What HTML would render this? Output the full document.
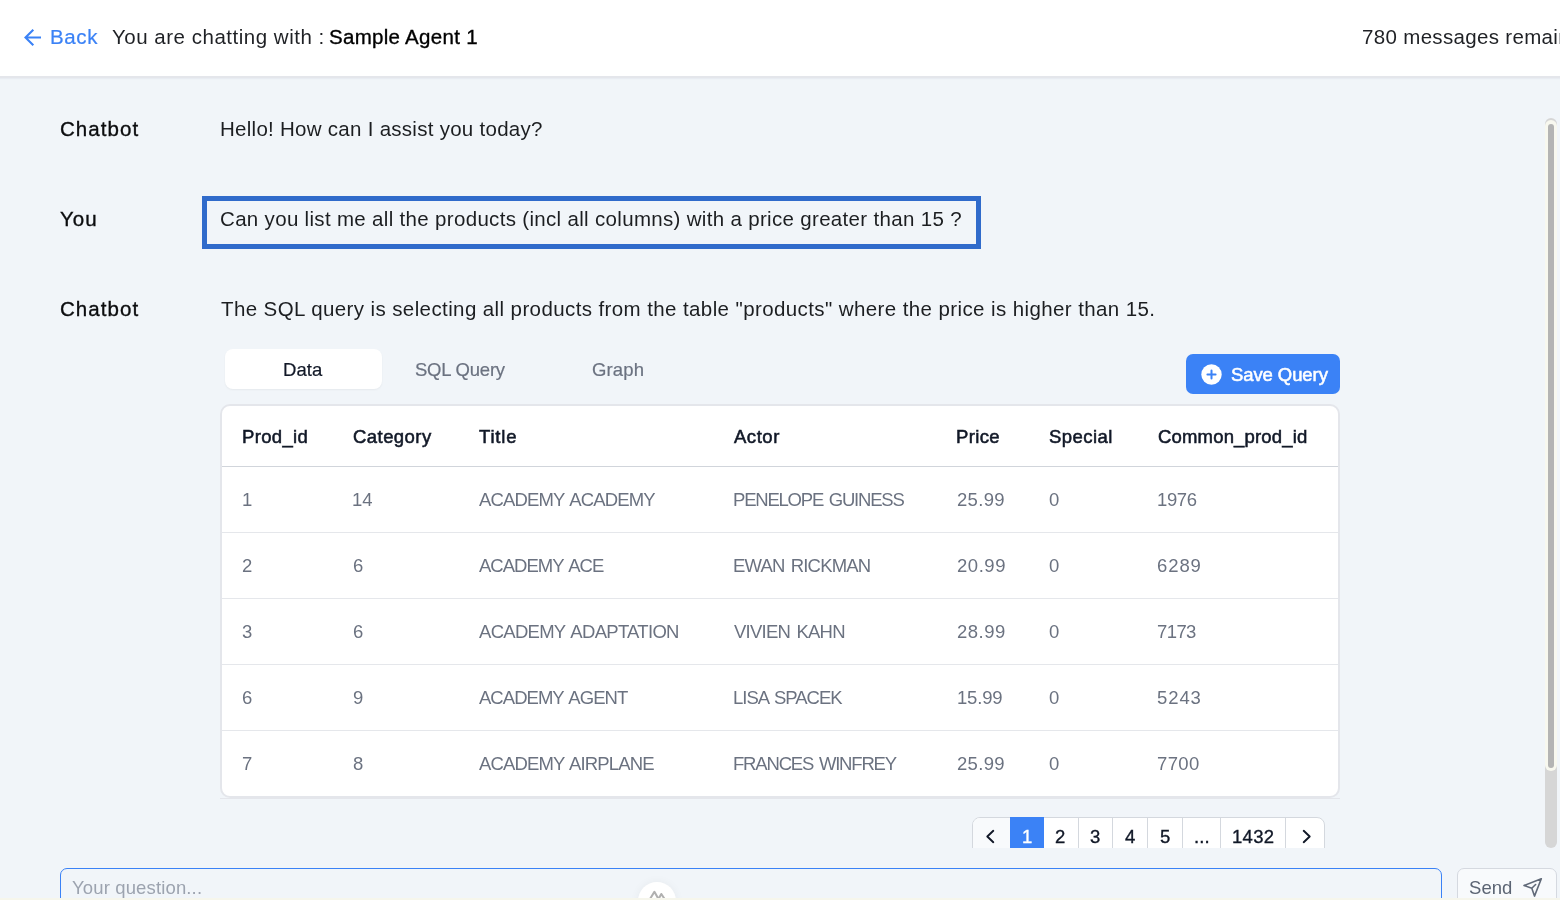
<!DOCTYPE html>
<html lang="en">
<head>
<meta charset="utf-8">
<title>Chat with Sample Agent 1</title>
<style>
*{box-sizing:border-box;margin:0;padding:0}
html,body{width:1560px;height:902px;overflow:hidden;background:#f1f5f9}
body{font-family:"Liberation Sans",sans-serif;color:#1c1e21;position:relative}
.a{position:absolute}
.t{position:absolute;white-space:nowrap;line-height:24px;will-change:transform}
#hdr{left:0;top:0;width:1560px;height:78px;background:#fff;border-bottom:2px solid #e4e6eb;box-shadow:0 1px 1px rgba(226,230,236,.6)}
#hl{left:202px;top:196px;width:779px;height:53px;border:5px solid #306bcb}
#tabsel{left:225px;top:349px;width:157px;height:40px;background:#fff;border-radius:8px;box-shadow:0 1px 2px rgba(0,0,0,.05)}
#savebtn{left:1186px;top:354px;width:154px;height:40px;background:#3b82f6;border-radius:7px}
#card{left:220px;top:404px;width:1120px;height:394px;background:#fff;border:2px solid #e4e6eb;border-radius:10px}
#cardline{left:220px;top:798px;width:1120px;height:1px;background:#e4e6eb}
.hr{position:absolute;left:222px;width:1116px;height:1px;background:#e5e7eb}
#pager{left:972px;top:817px;width:353px;height:31px;overflow:hidden}
#pager .in{position:absolute;left:0;top:0;width:353px;height:44px;border:1px solid #d4d8de;border-radius:8px;background:#fff;overflow:hidden}
#pager i{position:absolute;top:0;width:1px;height:44px;background:#d4d8de}
#inp{left:60px;top:868px;width:1382px;height:44px;border:1px solid #3b82f6;border-radius:7px;background:#f1f5f9}
#sendbtn{left:1457px;top:868px;width:100px;height:44px;border:1px solid #d5d9e0;border-radius:7px;background:#f8fafc}
#strip1{left:0;top:898px;width:1560px;height:2px;background:#f6f6ec}
#strip2{left:0;top:900px;width:1560px;height:2px;background:#fff}
#sbtrack{left:1545px;top:118px;width:12px;height:730px;border-radius:6px;background:#d6d6d6}
#sbcream{left:1545px;top:120px;width:12px;height:651px;border-radius:6px;background:#f8f8ef}
#sbthumb{left:1548px;top:124px;width:6px;height:644px;border-radius:3px;background:#b4b4b4}
#fab{left:638px;top:882px;width:38px;height:38px;border-radius:50%;background:#fff;box-shadow:0 0 10px rgba(0,0,0,.05)}
</style>
</head>
<body>
<div id="hdr" class="a"></div>
<svg class="a" style="left:22px;top:27px" width="22" height="22" viewBox="0 0 22 22" fill="none" stroke="#3b82f6" stroke-width="2.1" stroke-linecap="butt" stroke-linejoin="miter"><path d="M11.3 2.75L3.5 10.5L11.3 18.25M3.5 10.5H19"/></svg>
<div id="hl" class="a"></div>
<div id="tabsel" class="a"></div>
<div id="savebtn" class="a"></div>
<svg class="a" style="left:1201px;top:364px" width="21" height="21" viewBox="0 0 21 21"><circle cx="10.5" cy="10.5" r="10.2" fill="#fff"/><path d="M10.5 6.4v8.2M6.4 10.5h8.2" stroke="#3b82f6" stroke-width="2" stroke-linecap="round" fill="none"/></svg>
<div id="card" class="a"></div>
<div id="cardline" class="a"></div>
<div class="hr" style="top:466px;background:#d1d5db"></div>
<div class="hr" style="top:532px"></div>
<div class="hr" style="top:598px"></div>
<div class="hr" style="top:664px"></div>
<div class="hr" style="top:730px"></div>
<div id="pager" class="a"><div class="in">
<div class="a" style="left:0;top:0;width:37px;height:44px;background:#f8fafc"></div>
<i style="left:105px"></i><i style="left:139px"></i><i style="left:174px"></i><i style="left:209px"></i><i style="left:247px"></i><i style="left:312px"></i>
</div><div class="a" style="left:38px;top:0;width:34px;height:44px;background:#3b82f6"></div></div>
<svg class="a" style="left:984px;top:828px" width="13" height="17" viewBox="0 0 13 17" fill="none" stroke="#111827" stroke-width="1.9" stroke-linecap="round" stroke-linejoin="round"><path d="M9.3 2.8L3.3 8.5L9.3 14.2"/></svg>
<svg class="a" style="left:1300px;top:828px" width="13" height="17" viewBox="0 0 13 17" fill="none" stroke="#111827" stroke-width="1.9" stroke-linecap="round" stroke-linejoin="round"><path d="M3.7 2.8L9.7 8.5L3.7 14.2"/></svg>
<div id="inp" class="a"></div>
<div id="sendbtn" class="a"></div>
<svg class="a" style="left:1521px;top:876px" width="24" height="24" viewBox="0 0 24 24" fill="none" stroke="#606978" stroke-width="1.6" stroke-linejoin="round" stroke-linecap="round"><path d="M20.3 2.7L3 9.5L10.8 12.2L13.5 20.1Z M10.8 12.2L14.6 8.5"/></svg>
<div id="fab" class="a"></div>
<svg class="a" style="left:648px;top:888.8px" width="20" height="12" viewBox="0 0 20 12" fill="none" stroke="#b0b0b0" stroke-width="2.1" stroke-linejoin="round" stroke-linecap="round"><path d="M2 10L6.4 2.8L10.5 10L13.3 5L16.6 10"/></svg>

<span class="t" id="back" style="left:49.74px;top:24.90px;font-size:20.5px;letter-spacing:0.607px;color:#3b82f6;-webkit-text-stroke:0.2px currentColor;">Back</span>
<span class="t" id="chatw" style="left:112.29px;top:24.90px;font-size:20.5px;letter-spacing:0.512px;color:#1f2125;">You are chatting with :</span>
<span class="t" id="agent" style="left:328.72px;top:24.90px;font-size:20.5px;letter-spacing:0.292px;color:#000;-webkit-text-stroke:0.35px currentColor;">Sample Agent 1</span>
<span class="t" id="remain" style="left:1362.14px;top:24.90px;font-size:20.5px;letter-spacing:0.330px;color:#1f2125;">780 messages remaining</span>
<span class="t" id="l1" style="left:59.71px;top:117.10px;font-size:20.5px;letter-spacing:1.069px;color:#0b0c0e;-webkit-text-stroke:0.35px currentColor;">Chatbot</span>
<span class="t" id="m1" style="left:219.61px;top:117.10px;font-size:20.5px;letter-spacing:0.276px;color:#1c1e21;">Hello! How can I assist you today?</span>
<span class="t" id="l2" style="left:60.27px;top:207.10px;font-size:20.5px;letter-spacing:0.994px;color:#0b0c0e;-webkit-text-stroke:0.35px currentColor;">You</span>
<span class="t" id="m2" style="left:220.19px;top:207.10px;font-size:20.5px;letter-spacing:0.321px;color:#1c1e21;">Can you list me all the products (incl all columns) with a price greater than 15 ?</span>
<span class="t" id="l3" style="left:59.71px;top:297.10px;font-size:20.5px;letter-spacing:1.069px;color:#0b0c0e;-webkit-text-stroke:0.35px currentColor;">Chatbot</span>
<span class="t" id="m3" style="left:220.84px;top:297.10px;font-size:20.5px;letter-spacing:0.398px;color:#1c1e21;">The SQL query is selecting all products from the table &quot;products&quot; where the price is higher than 15.</span>
<span class="t" id="tab1" style="left:283.48px;top:357.89px;font-size:18.5px;letter-spacing:0.095px;color:#111827;-webkit-text-stroke:0.2px currentColor;">Data</span>
<span class="t" id="tab2" style="left:414.97px;top:357.89px;font-size:18.5px;letter-spacing:-0.218px;color:#6b7280;-webkit-text-stroke:0.2px currentColor;">SQL Query</span>
<span class="t" id="tab3" style="left:591.50px;top:357.89px;font-size:18.5px;letter-spacing:0.151px;color:#6b7280;-webkit-text-stroke:0.2px currentColor;">Graph</span>
<span class="t" id="saveq" style="left:1230.70px;top:362.59px;font-size:18.5px;letter-spacing:-0.088px;color:#fff;-webkit-text-stroke:0.55px currentColor;">Save Query</span>
<span class="t" id="h1" style="left:241.68px;top:424.89px;font-size:18.5px;letter-spacing:0.331px;color:#111827;-webkit-text-stroke:0.55px currentColor;">Prod_id</span>
<span class="t" id="h2" style="left:352.94px;top:424.89px;font-size:18.5px;letter-spacing:0.448px;color:#111827;-webkit-text-stroke:0.55px currentColor;">Category</span>
<span class="t" id="h3" style="left:479.43px;top:424.89px;font-size:18.5px;letter-spacing:0.794px;color:#111827;-webkit-text-stroke:0.55px currentColor;">Title</span>
<span class="t" id="h4" style="left:734.20px;top:424.89px;font-size:18.5px;letter-spacing:0.529px;color:#111827;-webkit-text-stroke:0.55px currentColor;">Actor</span>
<span class="t" id="h5" style="left:956.48px;top:424.89px;font-size:18.5px;letter-spacing:0.377px;color:#111827;-webkit-text-stroke:0.55px currentColor;">Price</span>
<span class="t" id="h6" style="left:1049.20px;top:424.89px;font-size:18.5px;letter-spacing:0.464px;color:#111827;-webkit-text-stroke:0.55px currentColor;">Special</span>
<span class="t" id="h7" style="left:1157.74px;top:424.89px;font-size:18.5px;letter-spacing:0.174px;color:#111827;-webkit-text-stroke:0.55px currentColor;">Common_prod_id</span>
<span class="t" id="r0a" style="left:241.58px;top:487.79px;font-size:18.5px;color:#6b7280;">1</span>
<span class="t" id="r0b" style="left:352.08px;top:487.79px;font-size:18.5px;color:#6b7280;">14</span>
<span class="t" id="r0c" style="left:479.45px;top:487.79px;font-size:18.5px;letter-spacing:-0.848px;color:#6b7280;word-spacing:1.8px;">ACADEMY ACADEMY</span>
<span class="t" id="r0d" style="left:732.77px;top:487.79px;font-size:18.5px;letter-spacing:-1.214px;color:#6b7280;word-spacing:1.8px;">PENELOPE GUINESS</span>
<span class="t" id="r0e" style="left:956.70px;top:487.79px;font-size:18.5px;letter-spacing:0.321px;color:#6b7280;">25.99</span>
<span class="t" id="r0f" style="left:1049.40px;top:487.79px;font-size:18.5px;color:#6b7280;">0</span>
<span class="t" id="r0g" style="left:1157.18px;top:487.79px;font-size:18.5px;letter-spacing:-0.410px;color:#6b7280;">1976</span>
<span class="t" id="r1a" style="left:242.00px;top:553.79px;font-size:18.5px;color:#6b7280;">2</span>
<span class="t" id="r1b" style="left:352.50px;top:553.79px;font-size:18.5px;color:#6b7280;">6</span>
<span class="t" id="r1c" style="left:479.45px;top:553.79px;font-size:18.5px;letter-spacing:-0.977px;color:#6b7280;word-spacing:1.8px;">ACADEMY ACE</span>
<span class="t" id="r1d" style="left:732.77px;top:553.79px;font-size:18.5px;letter-spacing:-0.810px;color:#6b7280;word-spacing:1.8px;">EWAN RICKMAN</span>
<span class="t" id="r1e" style="left:956.70px;top:553.79px;font-size:18.5px;letter-spacing:0.542px;color:#6b7280;">20.99</span>
<span class="t" id="r1f" style="left:1049.40px;top:553.79px;font-size:18.5px;color:#6b7280;">0</span>
<span class="t" id="r1g" style="left:1157.20px;top:553.79px;font-size:18.5px;letter-spacing:0.900px;color:#6b7280;">6289</span>
<span class="t" id="r2a" style="left:242.00px;top:619.79px;font-size:18.5px;color:#6b7280;">3</span>
<span class="t" id="r2b" style="left:352.50px;top:619.79px;font-size:18.5px;color:#6b7280;">6</span>
<span class="t" id="r2c" style="left:479.45px;top:619.79px;font-size:18.5px;letter-spacing:-0.713px;color:#6b7280;word-spacing:1.8px;">ACADEMY ADAPTATION</span>
<span class="t" id="r2d" style="left:733.60px;top:619.79px;font-size:18.5px;letter-spacing:-0.744px;color:#6b7280;word-spacing:1.8px;">VIVIEN KAHN</span>
<span class="t" id="r2e" style="left:956.70px;top:619.79px;font-size:18.5px;letter-spacing:0.484px;color:#6b7280;">28.99</span>
<span class="t" id="r2f" style="left:1049.40px;top:619.79px;font-size:18.5px;color:#6b7280;">0</span>
<span class="t" id="r2g" style="left:1157.20px;top:619.79px;font-size:18.5px;letter-spacing:-0.582px;color:#6b7280;">7173</span>
<span class="t" id="r3a" style="left:242.00px;top:685.79px;font-size:18.5px;color:#6b7280;">6</span>
<span class="t" id="r3b" style="left:352.50px;top:685.79px;font-size:18.5px;color:#6b7280;">9</span>
<span class="t" id="r3c" style="left:479.45px;top:685.79px;font-size:18.5px;letter-spacing:-0.965px;color:#6b7280;word-spacing:1.8px;">ACADEMY AGENT</span>
<span class="t" id="r3d" style="left:732.77px;top:685.79px;font-size:18.5px;letter-spacing:-1.008px;color:#6b7280;word-spacing:1.8px;">LISA SPACEK</span>
<span class="t" id="r3e" style="left:956.88px;top:685.79px;font-size:18.5px;letter-spacing:-0.194px;color:#6b7280;">15.99</span>
<span class="t" id="r3f" style="left:1049.40px;top:685.79px;font-size:18.5px;color:#6b7280;">0</span>
<span class="t" id="r3g" style="left:1157.19px;top:685.79px;font-size:18.5px;letter-spacing:0.908px;color:#6b7280;">5243</span>
<span class="t" id="r4a" style="left:242.00px;top:751.79px;font-size:18.5px;color:#6b7280;">7</span>
<span class="t" id="r4b" style="left:352.50px;top:751.79px;font-size:18.5px;color:#6b7280;">8</span>
<span class="t" id="r4c" style="left:479.45px;top:751.79px;font-size:18.5px;letter-spacing:-0.871px;color:#6b7280;word-spacing:1.8px;">ACADEMY AIRPLANE</span>
<span class="t" id="r4d" style="left:732.77px;top:751.79px;font-size:18.5px;letter-spacing:-1.182px;color:#6b7280;word-spacing:1.8px;">FRANCES WINFREY</span>
<span class="t" id="r4e" style="left:956.70px;top:751.79px;font-size:18.5px;letter-spacing:0.321px;color:#6b7280;">25.99</span>
<span class="t" id="r4f" style="left:1049.40px;top:751.79px;font-size:18.5px;color:#6b7280;">0</span>
<span class="t" id="r4g" style="left:1157.20px;top:751.79px;font-size:18.5px;letter-spacing:0.380px;color:#6b7280;">7700</span>
<span class="t" id="p1" style="left:1021.66px;top:825.19px;font-size:18.5px;color:#fff;-webkit-text-stroke:0.35px currentColor;">1</span>
<span class="t" id="p2" style="left:1054.70px;top:825.19px;font-size:18.5px;color:#111827;-webkit-text-stroke:0.35px currentColor;">2</span>
<span class="t" id="p3" style="left:1090.10px;top:825.19px;font-size:18.5px;color:#111827;-webkit-text-stroke:0.35px currentColor;">3</span>
<span class="t" id="p4" style="left:1125.31px;top:825.19px;font-size:18.5px;color:#111827;-webkit-text-stroke:0.35px currentColor;">4</span>
<span class="t" id="p5" style="left:1159.50px;top:825.19px;font-size:18.5px;color:#111827;-webkit-text-stroke:0.35px currentColor;">5</span>
<span class="t" id="p6" style="left:1194.06px;top:825.19px;font-size:18.5px;letter-spacing:0.163px;color:#111827;-webkit-text-stroke:0.35px currentColor;">...</span>
<span class="t" id="p7" style="left:1231.56px;top:825.19px;font-size:18.5px;letter-spacing:0.329px;color:#111827;-webkit-text-stroke:0.35px currentColor;">1432</span>
<span class="t" id="ph" style="left:72.10px;top:876.09px;font-size:18.5px;letter-spacing:0.144px;color:#9ca3af;">Your question...</span>
<span class="t" id="send" style="left:1468.83px;top:876.09px;font-size:18.5px;letter-spacing:0.069px;color:#5b6473;">Send</span>
<div id="sbtrack" class="a"></div>
<div id="sbcream" class="a"></div>
<div id="sbthumb" class="a"></div>
<div id="strip1" class="a"></div>
<div id="strip2" class="a"></div>

</body>
</html>
